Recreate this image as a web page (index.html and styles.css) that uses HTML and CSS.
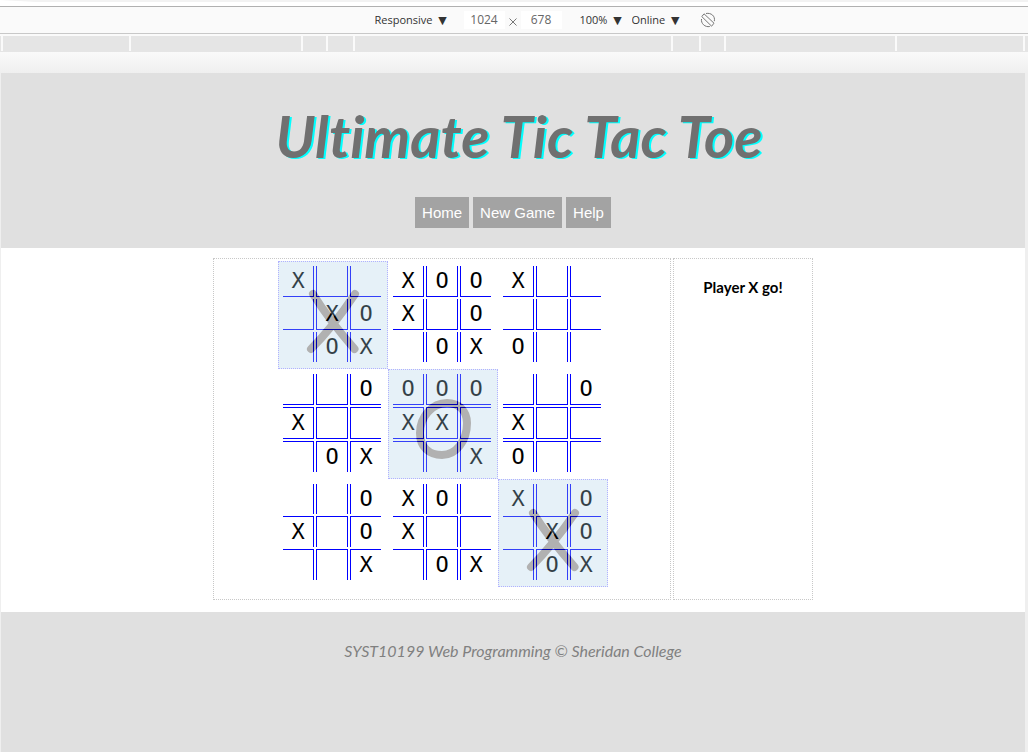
FILE: index.html
```html
<!DOCTYPE html>
<html lang="en">
<head>
<meta charset="utf-8">
<title>Ultimate Tic Tac Toe</title>
<link rel="stylesheet" href="styles.css">
</head>
<body>
<div class="tab-strip"></div>
<div class="toolbar">
  <select class="picker device" aria-label="Device"><option>Responsive&nbsp; ▼</option></select>
  <div class="size">
    <input class="dimension" type="text" value="1024" aria-label="Width">
    <svg class="times" viewBox="0 0 8 8" aria-hidden="true"><path d="M.5 .5L7.500 7.500M7.500 .5L.5 7.500"/></svg>
    <input class="dimension" type="text" value="678" aria-label="Height">
  </div>
  <select class="picker zoom" aria-label="Zoom"><option>100%&nbsp; ▼</option></select>
  <select class="picker network" aria-label="Network"><option>Online&nbsp; ▼</option></select>
  <button class="rotate" type="button" aria-label="Rotate">
    <svg viewBox="0 0 16 16" aria-hidden="true"><path d="M4 1.800L14 11.200M1.800 4.600L11.600 14.200M4 1.800L1.800 4.600M14 11.200L11.600 14.200M6 1.500C11 .5 15.500 4 14.300 9.200M1.500 7C.8 11.500 5 15.500 9.800 14.500"/></svg>
  </button>
</div>
<div class="ruler">
  <i class="tick edge-left"></i><i class="tick w126"></i><i class="tick w170"></i><i class="tick w23"></i><i class="tick w25"></i><i class="tick w316"></i><i class="tick w26"></i><i class="tick w23"></i><i class="tick w169"></i><i class="tick w126"></i><i class="tick edge-right"></i>
</div>
<div class="viewport">
  <div class="page">
    <header class="masthead">
      <h1 class="title">Ultimate Tic Tac Toe</h1>
      <nav class="menu"><a href="#home">Home</a><a href="#new">New Game</a><a href="#help">Help</a></nav>
    </header>
    <main class="game">
      <section class="board" aria-label="Board">
        <div class="grids">
          <div class="mini rule-below"><table>
            <tr><td>X</td><td></td><td></td></tr><tr><td></td><td>X</td><td>O</td></tr><tr><td></td><td>O</td><td>X</td></tr>
          </table><div class="won"><svg viewBox="0 0 108 106" aria-label="X wins"><path d="M34 32Q50 58 75.500 87M76 32Q54 65 32 87"/></svg></div></div>
          <div class="mini rule-below"><table>
            <tr><td>X</td><td>O</td><td>O</td></tr><tr><td>X</td><td></td><td>O</td></tr><tr><td></td><td>O</td><td>X</td></tr>
          </table></div>
          <div class="mini rule-below"><table>
            <tr><td>X</td><td></td><td></td></tr><tr><td></td><td></td><td></td></tr><tr><td>O</td><td></td><td></td></tr>
          </table></div>
          <div class="mini rule-below rule-above"><table>
            <tr><td></td><td></td><td>O</td></tr><tr><td>X</td><td></td><td></td></tr><tr><td></td><td>O</td><td>X</td></tr>
          </table></div>
          <div class="mini rule-below rule-above"><table>
            <tr><td>O</td><td>O</td><td>O</td></tr><tr><td>X</td><td>X</td><td></td></tr><tr><td></td><td></td><td>X</td></tr>
          </table><div class="won"><svg viewBox="0 0 108 108" aria-label="O wins"><path d="M58 33C70 33 78 41 78 53C78 71 67 85 53 85C40 85 31 77 31 63C31 47 43 33 58 33Z"/></svg></div></div>
          <div class="mini rule-below rule-above"><table>
            <tr><td></td><td></td><td>O</td></tr><tr><td>X</td><td></td><td></td></tr><tr><td>O</td><td></td><td></td></tr>
          </table></div>
          <div class="mini rule-above"><table>
            <tr><td></td><td></td><td>O</td></tr><tr><td>X</td><td></td><td>O</td></tr><tr><td></td><td></td><td>X</td></tr>
          </table></div>
          <div class="mini rule-above"><table>
            <tr><td>X</td><td>O</td><td></td></tr><tr><td>X</td><td></td><td></td></tr><tr><td></td><td>O</td><td>X</td></tr>
          </table></div>
          <div class="mini rule-above"><table>
            <tr><td>X</td><td></td><td>O</td></tr><tr><td></td><td>X</td><td>O</td></tr><tr><td></td><td>O</td><td>X</td></tr>
          </table><div class="won"><svg viewBox="0 0 108 106" aria-label="X wins"><path d="M34 33Q50 58 75.500 87M76 33Q54 65 32 87"/></svg></div></div>
        </div>
      </section>
      <aside class="status"><p>Player X go!</p></aside>
    </main>
    <footer class="footer"><p>SYST10199 Web Programming © Sheridan College</p></footer>
  </div>
</div>
</body>
</html>
```

FILE: styles.css
```css
* { box-sizing: border-box; }
body {
  margin: 0;
  min-height: 100vh;
  display: flex;
  flex-direction: column;
  background: #fafafa;
  font-family: "Liberation Sans", Arial, sans-serif;
}
h1, p { margin: 0; }

/* device bar */
.tab-strip {
  height: 6px;
  background: #fff;
  border-top: 2px solid #f2f2f2;
  border-left: 36px solid #fff;
}
.toolbar {
  display: flex;
  align-items: center;
  justify-content: center;
  height: 28px;
  padding-left: 62px;
  border-top: 1px solid #b0b0b0;
  border-bottom: 1px solid #c8c8c8;
}
.picker, .dimension {
  appearance: none;
  margin: 0;
  padding: 0;
  border: 0;
  background: transparent;
  color: #333;
  font: 11px/18px "Open Sans", "DejaVu Sans", sans-serif;
}
.size {
  display: flex;
  align-items: center;
  gap: 4px;
  margin: 0 18px 0 16px;
}
.dimension {
  width: 41px;
  background: #fff;
  color: #666;
  font-size: 12px;
  text-align: center;
}
.times { width: 8px; height: 8px; margin-top: 4px; fill: none; stroke: #777; }
.picker.zoom { margin-right: 9px; }
.rotate {
  display: flex;
  width: 16px;
  height: 16px;
  margin: 0 0 0 20px;
  padding: 0;
  border: 0;
  background: none;
}
.rotate svg { width: 16px; height: 16px; fill: none; stroke: #777; }

.ruler {
  display: flex;
  gap: 2px;
  height: 18px;
  padding-top: 2px;
  border-bottom: 1px solid #e5e5e5;
}
.tick { background: #e5e5e5; }
.edge-left { width: 1px; }
.edge-right { width: 3px; }
.w23 { flex: 23 1 0; }
.w25 { flex: 25 1 0; }
.w26 { flex: 26 1 0; }
.w126 { flex: 126 1 0; }
.w169 { flex: 169 1 0; }
.w170 { flex: 170 1 0; }
.w316 { flex: 316 1 0; }

/* page */
.viewport {
  flex: 1;
  display: flex;
  padding: 21px 3px 0 1px;
  background: linear-gradient(#fafafa, #efefef 21px);
}
.page {
  flex: 1;
  display: flex;
  flex-direction: column;
  background: #fff;
}
.masthead {
  padding: 24px 0 20px;
  background: #e0e0e0;
  text-align: center;
}
.title {
  height: 100px;
  padding-left: 12px;
  color: #707070;
  font: italic 700 58px/78px Lato, sans-serif;
  font-variant-ligatures: none;
  text-shadow: 2px 1px 0 aqua;
}
.menu {
  display: flex;
  justify-content: center;
  gap: 4px;
}
.menu a {
  padding: 7px;
  background: #a3a3a3;
  color: #fff;
  font-size: 15px;
  line-height: 17px;
  text-decoration: none;
}
.game {
  display: flex;
  justify-content: center;
  gap: 2px;
  padding: 10px 0 12px;
}
.board, .status { border: 1px dotted #c8c8c8; }
.board {
  display: flex;
  justify-content: center;
  width: 458px;
  padding: 2px 0 12px 2px;
}
.grids { display: grid; grid-template-columns: repeat(3, auto); }
.mini { position: relative; padding: 3px 5px 5px 3px; }
.mini table { border-collapse: separate; border-spacing: 2px; }
.mini td {
  box-sizing: content-box;
  width: 30px;
  height: 30px;
  padding: 0;
  color: #000;
  font: 22px/30px "DejaVu Sans Mono", monospace;
  text-align: center;
}
.mini td + td { border-left: 1px solid #00f; }
.mini td:not(:last-child) { border-right: 1px solid #00f; }
.rule-below tr:not(:last-child) td { border-bottom: 1px solid #00f; }
.rule-above tr + tr td { border-top: 1px solid #00f; }
.won {
  position: absolute;
  inset: 0;
  border: 1px dotted #00f;
  background: #add4eb;
  opacity: 0.3;
}
.won svg {
  display: block;
  width: 100%;
  height: 100%;
  fill: none;
  stroke: #000;
  stroke-width: 8px;
  stroke-linecap: round;
}
.status {
  width: 140px;
  padding-top: 16px;
  text-align: center;
  font: 700 15px/24px Lato, sans-serif;
}
.footer {
  flex: 1;
  padding: 24px 0;
  background: #e0e0e0;
  color: #808080;
  text-align: center;
  font: italic 16px/30px Lato, sans-serif;
}
```
